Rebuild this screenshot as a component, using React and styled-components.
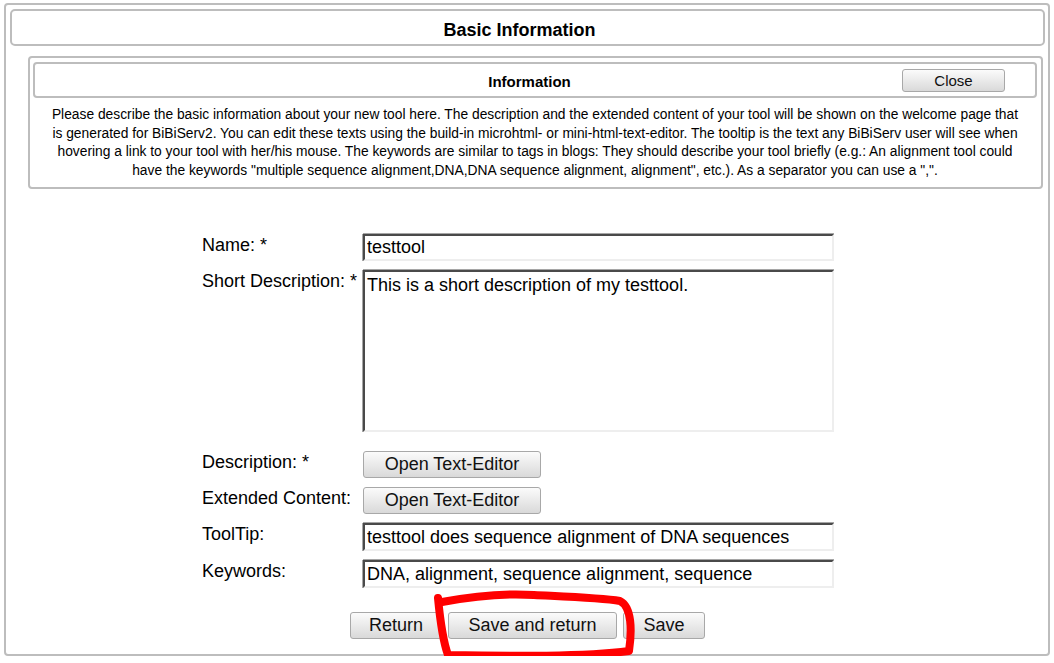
import React from "react";
import styled, { createGlobalStyle } from "styled-components";

const GlobalStyle = createGlobalStyle`
  body {
    margin: 0;
    padding: 3px 4px 0 4px;
    background: #fff;
    font-family: "Liberation Sans", Arial, sans-serif;
    color: #000;
  }
`;

const Panel = styled.section`
  box-sizing: border-box;
  width: 1046px;
  border: 2px solid #bdbdbd;
  border-radius: 4px;
  padding: 4px 3px 15px 4px;
`;

const Header = styled.div`
  box-sizing: border-box;
  height: 37px;
  border: 2px solid #bdbdbd;
  border-radius: 5px;
  display: flex;
  align-items: center;
  justify-content: center;
  padding: 6px 16px 0 0;
  font-size: 18px;
  font-weight: bold;
`;

const InfoBox = styled.div`
  box-sizing: border-box;
  margin: 10px 2px 0 18px;
  border: 2px solid #bdbdbd;
  border-radius: 4px;
  padding: 4px 4px 0 3px;
`;

const InfoHeader = styled.div`
  box-sizing: border-box;
  height: 36px;
  border: 2px solid #bdbdbd;
  border-radius: 4px;
  display: grid;
  grid-template-columns: 1fr auto 1fr;
  align-items: center;
  font-size: 15px;
  font-weight: bold;
`;

const InfoTitle = styled.div`
  padding: 2px 11px 0 0;
`;

const CloseCell = styled.div`
  display: flex;
  justify-content: flex-end;
  padding-right: 30px;
`;

const InfoText = styled.p`
  margin: 0;
  padding: 8px 15px 6px 15px;
  text-align: center;
  font-size: 13.8px;
  line-height: 18.7px;
`;

const Form = styled.div`
  display: grid;
  grid-template-columns: 161px 471px;
  row-gap: 9px;
  margin: 45px 0 0 192px;
`;

const Label = styled.div`
  font-size: 18px;
  line-height: 22px;
`;

const fieldBorder = `
  box-sizing: border-box;
  border-style: solid;
  border-width: 2px;
  border-color: #4a4a4a #eeeeee #eeeeee #4a4a4a;
  box-shadow: 0 -1px 0 #a6a6a6, -1px 0 0 #a6a6a6;
  font-family: "Liberation Sans", Arial, sans-serif;
  font-size: 18px;
  color: #000;
  background: #fff;
  outline: none;
`;

const TextInput = styled.input`
  ${fieldBorder}
  width: 471px;
  height: ${(p) => p.$h || 27}px;
  padding: 1px 2px 0 2px;
`;

const TextArea = styled.textarea`
  ${fieldBorder}
  display: block;
  width: 471px;
  height: 162px;
  padding: 2px 2px;
  margin-bottom: 10px;
  resize: none;
  line-height: 22px;
`;

const Button = styled.button`
  box-sizing: border-box;
  height: ${(p) => p.$h || 27}px;
  width: ${(p) => (p.$w ? `${p.$w}px` : "auto")};
  padding: 0;
  border: 1px solid #a8a8a8;
  border-radius: 3px;
  background: linear-gradient(#fbfbfb, #d9d9d9);
  font-family: "Liberation Sans", Arial, sans-serif;
  font-size: ${(p) => p.$fs || 18}px;
  color: #111;
  cursor: pointer;
`;

const EditorButton = styled(Button)`
  justify-self: start;
`;

const ButtonRow = styled.div`
  display: flex;
  justify-content: center;
  gap: 6px;
  margin-top: 24px;
`;

const Marked = styled.span`
  position: relative;
  display: inline-flex;
`;

const Scribble = styled.svg`
  position: absolute;
  left: -14px;
  top: -19px;
  width: 200px;
  height: 66px;
  pointer-events: none;
  overflow: visible;
`;

export default function App() {
  return (
    <>
      <GlobalStyle />
      <Panel>
        <Header>Basic Information</Header>
        <InfoBox>
          <InfoHeader>
            <div />
            <InfoTitle>Information</InfoTitle>
            <CloseCell>
              <Button $h={23} $w={103} $fs={15}>
                Close
              </Button>
            </CloseCell>
          </InfoHeader>
          <InfoText>
            Please describe the basic information about your new tool here. The
            description and the extended content of your tool will be shown on
            the welcome page that is generated for BiBiServ2. You can edit these
            texts using the build-in microhtml- or mini-html-text-editor. The
            tooltip is the text any BiBiServ user will see when hovering a link
            to your tool with her/his mouse. The keywords are similar to tags in
            blogs: They should describe your tool briefly (e.g.: An alignment
            tool could have the keywords "multiple sequence alignment,DNA,DNA
            sequence alignment, alignment", etc.). As a separator you can use a
            ",".
          </InfoText>
        </InfoBox>

        <Form>
          <Label>Name: *</Label>
          <TextInput defaultValue="testtool" />
          <Label>Short Description: *</Label>
          <TextArea defaultValue="This is a short description of my testtool." />
          <Label>Description: *</Label>
          <EditorButton $w={178}>Open Text-Editor</EditorButton>
          <Label>Extended Content:</Label>
          <EditorButton $w={178}>Open Text-Editor</EditorButton>
          <Label>ToolTip:</Label>
          <TextInput
            $h={28}
            defaultValue="testtool does sequence alignment of DNA sequences"
          />
          <Label>Keywords:</Label>
          <TextInput
            $h={28}
            defaultValue="DNA, alignment, sequence alignment, sequence"
          />
        </Form>

        <ButtonRow>
          <Button $w={92}>Return</Button>
          <Marked>
            <Button $w={169}>Save and return</Button>
            <Scribble viewBox="0 0 200 66">
              <path
                d="M8 9 C 40 3, 70 0, 100 2 C 140 4, 168 5, 186 8 C 198 14, 198 38, 195 58 C 150 64, 80 63, 14 62 C 9 48, 6 26, 4 5"
                fill="none"
                stroke="#ff0000"
                strokeWidth="8"
                strokeLinecap="round"
                strokeLinejoin="round"
              />
            </Scribble>
          </Marked>
          <Button $w={82}>Save</Button>
        </ButtonRow>
      </Panel>
    </>
  );
}
